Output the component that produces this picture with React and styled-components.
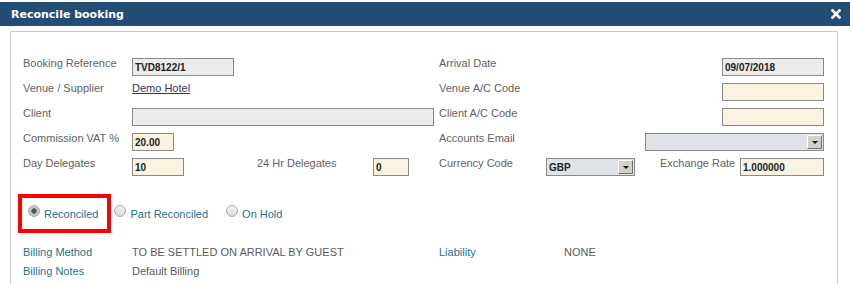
import React from 'react'
import styled, { createGlobalStyle } from 'styled-components'

const GlobalStyle = createGlobalStyle`
    html, body {
        margin: 0;
        padding: 0;
        background: #fff;
        overflow: hidden;
    }
    body {
        font-family: "Liberation Sans", Arial, sans-serif;
    }
`

const Dialog = styled.div`
    width: 850px;
    padding-top: 2px;
`

const TitleBar = styled.div`
    height: 24px;
    background: #234d74;
    display: flex;
    align-items: center;
    justify-content: space-between;
    padding: 0 9px 0 11px;
`

const Title = styled.span`
    font-family: "DejaVu Sans", Verdana, sans-serif;
    font-weight: bold;
    font-size: 11px;
    color: #fff;
`

const CloseButton = styled.button`
    border: 0;
    background: none;
    padding: 0;
    width: 10px;
    height: 10px;
    display: flex;
    cursor: pointer;
`

const Body = styled.div`
    padding: 5px 12px 0 10px;
`

const Panel = styled.div`
    border: 1px solid #c9c9c9;
    border-bottom: none;
    padding: 26px 13px 30px 12px;
`

const FieldRow = styled.div`
    display: grid;
    grid-template-columns: 416px 1fr;
    height: 25px;
`

const Cell = styled.div`
    display: flex;
    align-items: flex-start;
`

const Label = styled.span`
    width: ${p => p.$width || 109}px;
    margin-left: ${p => p.$offset || 0}px;
    margin-top: -1px;
    font-size: 11px;
    line-height: 13px;
    color: #626262;
    white-space: nowrap;
`

const Input = styled.input`
    box-sizing: border-box;
    width: ${p => p.$width}px;
    height: 18px;
    margin: 0 0 0 ${p => (p.$right ? 'auto' : '0')};
    padding: 0 2px;
    border: 1px solid #8a8a8a;
    background: ${p => (p.readOnly ? '#ececec' : '#faf3e2')};
    font-family: "Liberation Sans", Arial, sans-serif;
    font-size: 10px;
    font-weight: bold;
    color: #222;
    outline: none;
`

const Link = styled.a`
    margin-top: -1px;
    font-size: 11px;
    line-height: 13px;
    color: #333366;
    text-decoration: underline;
`

const Select = styled.div`
    box-sizing: border-box;
    width: ${p => p.$width}px;
    height: 18px;
    margin-left: ${p => (p.$right ? 'auto' : '0')};
    border: 1px solid #8a8a8a;
    background: #dfe3e8;
    display: flex;
    align-items: center;
    justify-content: space-between;
    padding: 0 1px 0 2px;
    font-size: 10px;
    font-weight: bold;
    color: #222;
`

const SelectArrow = styled.span`
    box-sizing: border-box;
    width: 15px;
    height: 14px;
    background: #d4d0c8;
    border-top: 1px solid #fff;
    border-left: 1px solid #fff;
    border-right: 1px solid #707070;
    border-bottom: 1px solid #707070;
    display: flex;
    align-items: center;
    justify-content: center;

    &::after {
        content: '';
        border-left: 3px solid transparent;
        border-right: 3px solid transparent;
        border-top: 3px solid #111;
        margin-top: 1px;
    }
`

const RadioGroup = styled.div`
    display: flex;
    align-items: center;
    margin: 11px 0 0 -5px;
    height: 39px;
`

const RadioOption = styled.label`
    display: flex;
    align-items: center;
    gap: 4px;
    margin-left: ${p => p.$before || 0}px;
    font-size: 11px;
    color: #1f7290;
    cursor: pointer;
    ${p => p.$highlight && `
        box-sizing: border-box;
        height: 39px;
        border: 4px solid #f00;
        padding: 0 9px 0 6px;
    `}
`

const RadioDot = styled.span`
    box-sizing: border-box;
    width: 12px;
    height: 12px;
    margin-bottom: 5px;
    border-radius: 50%;
    border: 1px solid #a8a8a8;
    background: ${p => (p.$checked
        ? 'radial-gradient(circle, #555 0 2.4px, #bdbdbd 2.9px, #d6d6d6 100%)'
        : 'linear-gradient(#f4f4f4, #d9d9d9)')};
`

const InfoRow = styled.div`
    display: grid;
    grid-template-columns: 109px 307px 125px 1fr;
    height: 19px;
    align-items: center;
    font-size: 11px;
    margin-top: ${p => p.$first ? 9 : 0}px;
`

const InfoLabel = styled.span`
    color: #1f7290;
`

const InfoValue = styled.span`
    color: #5a5a5a;
`

const CloseIcon = () => (
    <svg width="10" height="10" viewBox="0 0 10 10">
        <path d="M1.5 1.5 L8.5 8.5 M8.5 1.5 L1.5 8.5" stroke="#fff" strokeWidth="2.6" strokeLinecap="square" />
    </svg>
)

const Radio = ({ label, checked, highlight, before }) => (
    <RadioOption $highlight={highlight} $before={before}>
        <RadioDot $checked={checked} />
        {label}
    </RadioOption>
)

export default function App() {
    return (
        <>
            <GlobalStyle />
            <Dialog>
                <TitleBar>
                    <Title>Reconcile booking</Title>
                    <CloseButton aria-label="Close"><CloseIcon /></CloseButton>
                </TitleBar>
                <Body>
                    <Panel>
                        <FieldRow>
                            <Cell>
                                <Label>Booking Reference</Label>
                                <Input readOnly $width={102} defaultValue="TVD8122/1" />
                            </Cell>
                            <Cell>
                                <Label>Arrival Date</Label>
                                <Input readOnly $right $width={102} defaultValue="09/07/2018" />
                            </Cell>
                        </FieldRow>
                        <FieldRow>
                            <Cell>
                                <Label>Venue / Supplier</Label>
                                <Link href="#">Demo Hotel</Link>
                            </Cell>
                            <Cell>
                                <Label>Venue A/C Code</Label>
                                <Input $right $width={102} defaultValue="" />
                            </Cell>
                        </FieldRow>
                        <FieldRow>
                            <Cell>
                                <Label>Client</Label>
                                <Input readOnly $width={302} defaultValue="" />
                            </Cell>
                            <Cell>
                                <Label>Client A/C Code</Label>
                                <Input $right $width={102} defaultValue="" />
                            </Cell>
                        </FieldRow>
                        <FieldRow>
                            <Cell>
                                <Label>Commission VAT %</Label>
                                <Input $width={42} defaultValue="20.00" />
                            </Cell>
                            <Cell>
                                <Label>Accounts Email</Label>
                                <Select $right $width={179}>
                                    <span />
                                    <SelectArrow />
                                </Select>
                            </Cell>
                        </FieldRow>
                        <FieldRow>
                            <Cell>
                                <Label>Day Delegates</Label>
                                <Input $width={52} defaultValue="10" />
                                <Label $offset={73} $width={116}>24 Hr Delegates</Label>
                                <Input $width={36} defaultValue="0" />
                            </Cell>
                            <Cell>
                                <Label $width={107}>Currency Code</Label>
                                <Select $width={89}>
                                    <span>GBP</span>
                                    <SelectArrow />
                                </Select>
                                <Label $offset={25} $width={79}>Exchange Rate</Label>
                                <Input $right $width={84} defaultValue="1.000000" />
                            </Cell>
                        </FieldRow>

                        <RadioGroup>
                            <Radio label="Reconciled" checked highlight />
                            <Radio label="Part Reconciled" before={3} />
                            <Radio label="On Hold" before={18} />
                        </RadioGroup>

                        <InfoRow $first>
                            <InfoLabel>Billing Method</InfoLabel>
                            <InfoValue>TO BE SETTLED ON ARRIVAL BY GUEST</InfoValue>
                            <InfoLabel>Liability</InfoLabel>
                            <InfoValue>NONE</InfoValue>
                        </InfoRow>
                        <InfoRow>
                            <InfoLabel>Billing Notes</InfoLabel>
                            <InfoValue>Default Billing</InfoValue>
                        </InfoRow>
                    </Panel>
                </Body>
            </Dialog>
        </>
    )
}
